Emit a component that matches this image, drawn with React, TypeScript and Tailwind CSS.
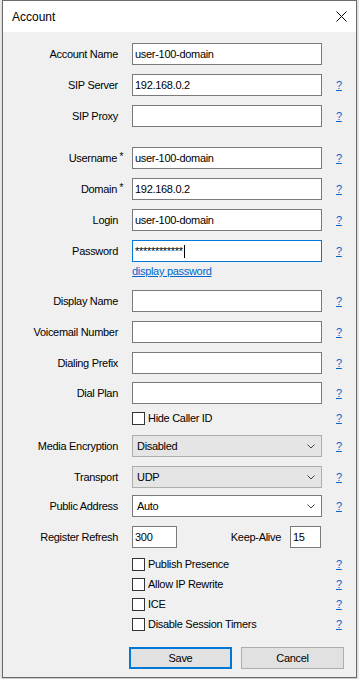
import React from 'react';

function Help() {
  return <span className="ml-[14px] text-[#0066cc] underline leading-[13px]">?</span>;
}

function Field({ value, focused }: { value?: string; focused?: boolean }) {
  return (
    <div
      className={`w-[190px] h-[22px] bg-white border flex items-center pl-[2px] whitespace-nowrap ${
        focused ? 'border-[#0078d7]' : 'border-[#7a7a7a]'
      }`}
    >
      {value}
      {focused && <span className="ml-[1px] inline-block w-px h-[13px] bg-black" />}
    </div>
  );
}

function Select({ value, gray }: { value: string; gray?: boolean }) {
  return (
    <div
      className={`w-[190px] h-[22px] border flex items-center justify-between pl-[4px] pr-[6px] ${
        gray ? 'bg-[#e5e5e5] border-[#adadad]' : 'bg-white border-[#7a7a7a]'
      }`}
    >
      <span>{value}</span>
      <svg width="8" height="5" viewBox="0 0 8 5" className="text-[#444]">
        <path d="M0.5 0.5 L4 4 L7.5 0.5" fill="none" stroke="currentColor" strokeWidth="1" />
      </svg>
    </div>
  );
}

function Row({
  label,
  req,
  mt,
  help = true,
  children,
}: {
  label: string;
  req?: boolean;
  mt: string;
  help?: boolean;
  children: React.ReactNode;
}) {
  return (
    <div className={`flex items-center ${mt}`}>
      <div className="w-[115px] text-right">
        <span className={`relative ${req ? 'mr-[1px]' : ''}`}>
          {label}
          {req && <span className="absolute -right-[6px] -top-[3px] text-[10px]">*</span>}
        </span>
      </div>
      <div className="ml-[14px]">{children}</div>
      {help && <Help />}
    </div>
  );
}

function Check({ label, mt }: { label: string; mt: string }) {
  return (
    <div className={`flex items-center h-[13px] ${mt}`}>
      <div className="ml-[129px] w-[13px] h-[13px] border border-[#333] bg-white" />
      <span className="ml-[3px] w-[174px] leading-[13px]">{label}</span>
      <Help />
    </div>
  );
}

export default function App() {
  return (
    <div className="w-[359px] h-[679px] bg-[#ececec] font-['Liberation_Sans',Arial,sans-serif] text-[11px] tracking-[-0.3px] text-black">
      <div className="ml-[2px] w-[355px] h-[678px] border border-[#6b6b6b] bg-[#f0f0f0] flex flex-col shadow-[0_1px_2px_rgba(0,0,0,0.2)]">
        {/* title bar */}
        <div className="h-[31px] bg-white flex items-center justify-between pl-[9px] pr-[9px] shrink-0">
          <span className="text-[12px] tracking-normal">Account</span>
          <svg width="11" height="11" viewBox="0 0 11 11">
            <path d="M0.5 0.5 L10.5 10.5 M10.5 0.5 L0.5 10.5" stroke="#000" strokeWidth="1" />
          </svg>
        </div>

        <div className="flex flex-col">
          <Row label="Account Name" mt="mt-[11px]" help={false}>
            <Field value="user-100-domain" />
          </Row>
          <Row label="SIP Server" mt="mt-[9px]">
            <Field value="192.168.0.2" />
          </Row>
          <Row label="SIP Proxy" mt="mt-[9px]">
            <Field />
          </Row>

          <Row label="Username" req mt="mt-[20px]">
            <Field value="user-100-domain" />
          </Row>
          <Row label="Domain" req mt="mt-[9px]">
            <Field value="192.168.0.2" />
          </Row>
          <Row label="Login" mt="mt-[9px]">
            <Field value="user-100-domain" />
          </Row>
          <Row label="Password" mt="mt-[9px]">
            <Field value="************" focused />
          </Row>
          <div className="h-[28px] pl-[129px] pt-[3px] leading-[13px]">
            <span className="text-[#0066cc] underline">display password</span>
          </div>

          <Row label="Display Name" mt="mt-0">
            <Field />
          </Row>
          <Row label="Voicemail Number" mt="mt-[9px]">
            <Field />
          </Row>
          <Row label="Dialing Prefix" mt="mt-[9px]">
            <Field />
          </Row>
          <Row label="Dial Plan" mt="mt-[8px]">
            <Field />
          </Row>
          <Check label="Hide Caller ID" mt="mt-[8px]" />

          <Row label="Media Encryption" mt="mt-[10px]">
            <Select value="Disabled" gray />
          </Row>
          <Row label="Transport" mt="mt-[9px]">
            <Select value="UDP" gray />
          </Row>
          <Row label="Public Address" mt="mt-[7px]">
            <Select value="Auto" />
          </Row>

          <div className="flex items-center mt-[9px]">
            <div className="w-[115px] text-right">Register Refresh</div>
            <div className="ml-[14px] w-[45px] h-[22px] bg-white border border-[#7a7a7a] pl-[2px] flex items-center">
              300
            </div>
            <div className="w-[104px] text-right">Keep-Alive</div>
            <div className="ml-[9px] w-[31px] h-[22px] bg-white border border-[#7a7a7a] pl-[2px] flex items-center">
              15
            </div>
          </div>

          <Check label="Publish Presence" mt="mt-[10px]" />
          <Check label="Allow IP Rewrite" mt="mt-[7px]" />
          <Check label="ICE" mt="mt-[7px]" />
          <Check label="Disable Session Timers" mt="mt-[7px]" />

          <div className="flex mt-[16px] ml-[126px] gap-[9px]">
            <button className="w-[103px] h-[22px] bg-[#e1e1e1] border-2 border-[#0078d7] flex items-center justify-center">
              Save
            </button>
            <button className="w-[103px] h-[22px] bg-[#e1e1e1] border border-[#adadad] flex items-center justify-center">
              Cancel
            </button>
          </div>
        </div>
      </div>
    </div>
  );
}
